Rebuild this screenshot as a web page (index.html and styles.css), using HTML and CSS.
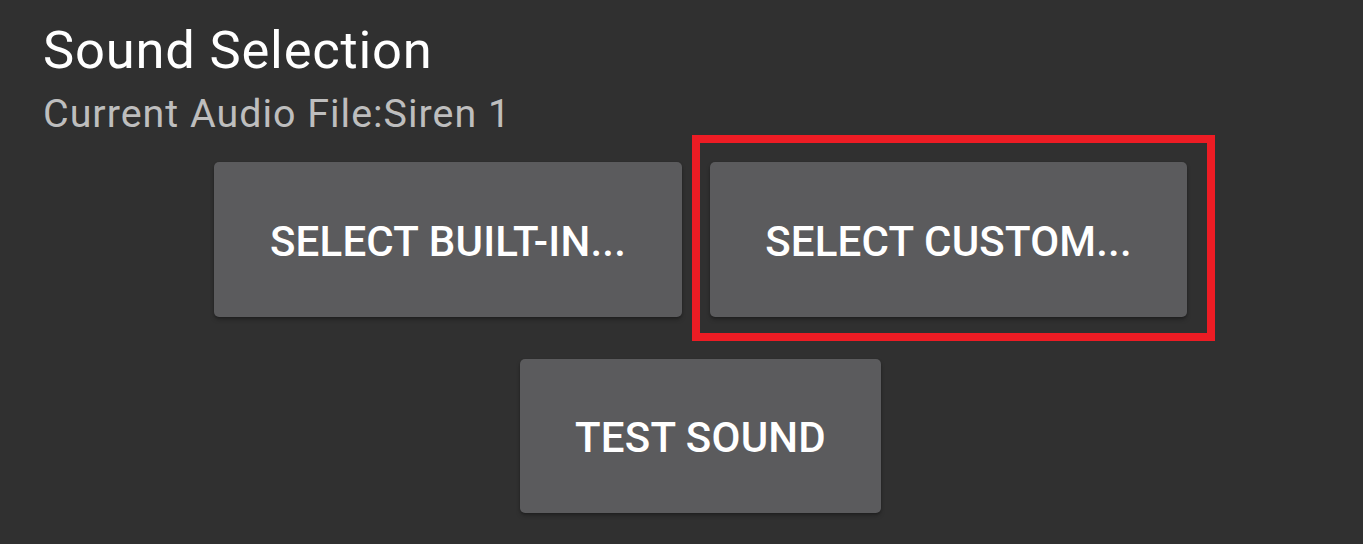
FILE: index.html
```html
<!DOCTYPE html>
<html>
<head>
<meta charset="utf-8">
<link rel="stylesheet" href="styles.css">
</head>
<body>
<div class="screen">
  <h1 class="title">Sound Selection</h1>
  <p class="subtitle">Current Audio File:Siren 1</p>
  <div class="actions">
    <div class="row">
      <button class="btn btn-builtin">SELECT BUILT-IN...</button>
      <div class="highlight-wrap">
        <button class="btn btn-custom">SELECT CUSTOM...</button>
        <div class="highlight"></div>
      </div>
    </div>
    <div class="row">
      <button class="btn btn-test">TEST SOUND</button>
    </div>
  </div>
</div>
</body>
</html>
```
FILE: styles.css
```css
html, body {
  margin: 0;
  padding: 0;
  background: #303030;
  height: 100%;
  overflow: hidden;
}
.screen {
  font-family: Roboto, "Noto Sans", sans-serif;
  padding: 19px 0 0 43px;
  box-sizing: border-box;
  height: 544px;
}
.title {
  margin: 0;
  font-size: 52.5px;
  font-weight: 400;
  line-height: 62px;
  letter-spacing: 0.8px;
  color: #ffffff;
}
.subtitle {
  margin: 10px 0 0 0;
  font-size: 39.4px;
  font-weight: 400;
  line-height: 46px;
  letter-spacing: 1px;
  color: rgba(255, 255, 255, 0.7);
}
.actions {
  margin-top: 25px;
  margin-left: -5px;
  display: flex;
  flex-direction: column;
  align-items: center;
  gap: 42px;
}
.row {
  display: flex;
  gap: 28px;
}
.btn {
  font-family: Roboto, "Noto Sans", sans-serif;
  font-weight: 500;
  font-size: 42px;
  color: #ffffff;
  background: #5b5b5d;
  border: none;
  border-radius: 5px;
  height: 155px;
  padding: 3px 0 0 0;
  box-sizing: border-box;
  box-shadow: 0 3px 4px rgba(0, 0, 0, 0.22), 0 1px 2px rgba(0, 0, 0, 0.2);
  letter-spacing: 0.2px;
  display: flex;
  align-items: center;
  justify-content: center;
}
.btn-builtin { width: 468px; }
.btn-custom { width: 477px; }
.btn-test { width: 361px; height: 154px; }
.highlight-wrap {
  position: relative;
}
.highlight {
  position: absolute;
  left: -18px;
  right: -28px;
  top: -27px;
  bottom: -24px;
  border: 8px solid #ed1c24;
  pointer-events: none;
}
```
